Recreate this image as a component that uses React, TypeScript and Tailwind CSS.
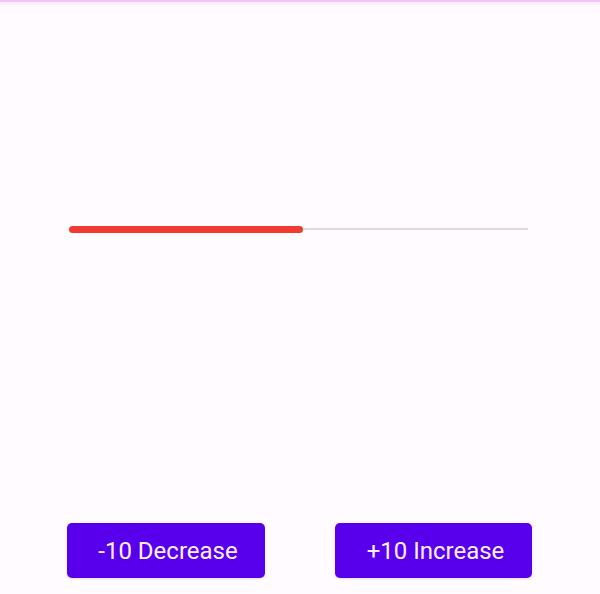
import { useState } from "react";

export default function App() {
  const [value, setValue] = useState(50);

  const change = (delta: number) => {
    setValue((v) => Math.min(100, Math.max(0, v + delta)));
  };

  return (
    <div
      className="h-[594px] w-[600px] bg-[#fffbfe] flex flex-col"
      style={{ fontFamily: "Roboto, 'Noto Sans', sans-serif" }}
    >
      <div className="h-[2px] bg-[#f3c4f8]" />
      <div className="h-[6px] bg-gradient-to-b from-[#f8eefa] to-[#fffbfe]" />

      <div className="mt-[217px] ml-[69px] w-[459px] h-[8px] flex items-center">
        <div
          className="h-[7px] rounded-full bg-[#f23b30]"
          style={{ width: `${(value / 100) * 459 + 4}px` }}
        />
        <div className="flex-1 h-[2px] bg-[#dcdadd]" />
      </div>

      <div className="flex-1" />

      <div className="flex justify-between pl-[67px] pr-[68px] pb-[16px]">
        <button
          className="w-[198px] h-[55px] rounded-[5px] bg-[#5800eb] text-[#fdf0ff] text-[24px] pl-[4px] shadow-sm"
          onClick={() => change(-10)}
        >
          -10 Decrease
        </button>
        <button
          className="w-[197px] h-[55px] rounded-[5px] bg-[#5800eb] text-[#fdf0ff] text-[24px] pl-[4px] shadow-sm"
          onClick={() => change(10)}
        >
          +10 Increase
        </button>
      </div>
    </div>
  );
}
